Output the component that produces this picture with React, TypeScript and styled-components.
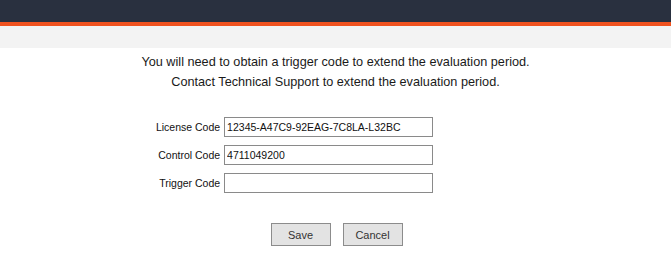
import React from 'react';
import styled, {createGlobalStyle} from 'styled-components';

const GlobalStyle = createGlobalStyle`
  body {
    margin: 0;
    background: #ffffff;
    font-family: "Liberation Sans", Arial, sans-serif;
    color: #1a1a1a;
  }
`;

const TopBar = styled.div`
  height: 22px;
  background: #29303f;
  border-bottom: 4px solid #f0521f;
`;

const SubBar = styled.div`
  height: 22px;
  background: #f3f3f3;
`;

const Message = styled.div`
  text-align: center;
  font-size: 12.7px;
  line-height: 20px;
  padding-top: 4px;
`;

const Form = styled.div`
  display: grid;
  grid-template-columns: auto 209px;
  column-gap: 4px;
  row-gap: 8px;
  justify-content: center;
  align-items: center;
  padding-right: 82px;
  margin-top: 25px;
`;

const Label = styled.label`
  font-size: 10.5px;
  text-align: right;
  color: #111;
`;

const Field = styled.input`
  box-sizing: border-box;
  height: 20px;
  width: 209px;
  margin: 0;
  padding: 1px 2px;
  border: 1px solid #8a8a8a;
  font-family: "Liberation Sans", Arial, sans-serif;
  font-size: 10.5px;
  color: #111;
  background: #fff;
  outline: none;
`;

const Buttons = styled.div`
  display: flex;
  justify-content: center;
  gap: 12px;
  margin-top: 30px;
  padding-left: 2px;
`;

const Button = styled.button`
  box-sizing: border-box;
  width: 60px;
  height: 23px;
  border: 1px solid #8c8c8c;
  background: #e3e3e3;
  font-family: "Liberation Sans", Arial, sans-serif;
  font-size: 11px;
  color: #333;
  padding: 0;
`;

const fields = [
  {label: 'License Code', value: '12345-A47C9-92EAG-7C8LA-L32BC'},
  {label: 'Control Code', value: '4711049200'},
  {label: 'Trigger Code', value: ''},
];

export default function App() {
  return (
    <>
      <GlobalStyle />
      <TopBar />
      <SubBar />
      <Message>
        <div>You will need to obtain a trigger code to extend the evaluation period.</div>
        <div>Contact Technical Support to extend the evaluation period.</div>
      </Message>
      <Form>
        {fields.map(f => (
          <React.Fragment key={f.label}>
            <Label>{f.label}</Label>
            <Field defaultValue={f.value} />
          </React.Fragment>
        ))}
      </Form>
      <Buttons>
        <Button>Save</Button>
        <Button>Cancel</Button>
      </Buttons>
    </>
  );
}
